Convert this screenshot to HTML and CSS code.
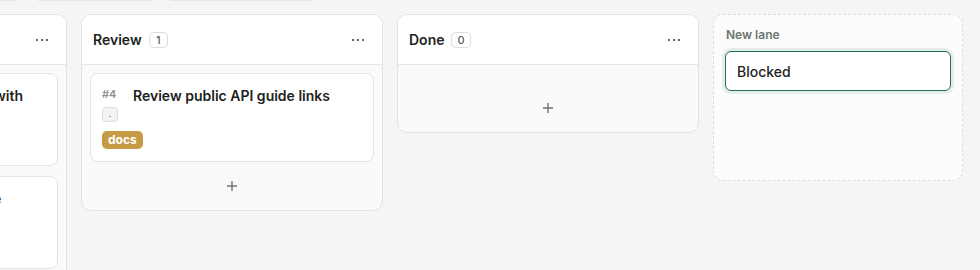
FILE: index.html
```html
<!DOCTYPE html>
<html lang="en">
<head>
<meta charset="utf-8">
<title>Board</title>
<link rel="stylesheet" href="styles.css">
</head>
<body>
<div class="toolbar">
  <span class="tool tool-a"></span>
  <span class="tool tool-b"></span>
  <span class="tool tool-c"></span>
</div>
<div class="board">
  <section class="lane lane-cut">
    <header class="lane-head">
      <h2 class="lane-title">In progress</h2>
      <span class="count">2</span>
      <button class="more" aria-label="Lane menu"><svg width="14" height="4" viewBox="0 0 14 4"><rect x="1" y="1" width="2" height="2"/><rect x="6" y="1" width="2" height="2"/><rect x="11" y="1" width="2" height="2"/></svg></button>
    </header>
    <div class="lane-body">
      <div class="cards">
        <article class="card">
          <div class="card-row">
            <div class="card-meta"><span class="card-id">#2</span><span class="chip">.</span></div>
            <h3 class="card-title">Replace legacy time input with native picker</h3>
          </div>
          <div class="tags"><span class="tag tag-ui">ui</span></div>
        </article>
        <article class="card">
          <div class="card-row">
            <div class="card-meta"><span class="card-id">#3</span><span class="chip">.</span></div>
            <h3 class="card-title">Audit contrast in the profile header</h3>
          </div>
          <div class="tags"><span class="tag tag-docs">a11y</span></div>
        </article>
      </div>
      <button class="add" aria-label="Add card"><svg width="12" height="12" viewBox="0 0 12 12"><path d="M6 1v10M1 6h10"/></svg></button>
    </div>
  </section>

  <section class="lane">
    <header class="lane-head">
      <h2 class="lane-title">Review</h2>
      <span class="count">1</span>
      <button class="more" aria-label="Lane menu"><svg width="14" height="4" viewBox="0 0 14 4"><rect x="1" y="1" width="2" height="2"/><rect x="6" y="1" width="2" height="2"/><rect x="11" y="1" width="2" height="2"/></svg></button>
    </header>
    <div class="lane-body">
      <div class="cards">
        <article class="card">
          <div class="card-row">
            <div class="card-meta"><span class="card-id">#4</span><span class="chip">.</span></div>
            <h3 class="card-title">Review public API guide links</h3>
          </div>
          <div class="tags"><span class="tag tag-docs">docs</span></div>
        </article>
      </div>
      <button class="add" aria-label="Add card"><svg width="12" height="12" viewBox="0 0 12 12"><path d="M6 1v10M1 6h10"/></svg></button>
    </div>
  </section>

  <section class="lane">
    <header class="lane-head">
      <h2 class="lane-title">Done</h2>
      <span class="count">0</span>
      <button class="more" aria-label="Lane menu"><svg width="14" height="4" viewBox="0 0 14 4"><rect x="1" y="1" width="2" height="2"/><rect x="6" y="1" width="2" height="2"/><rect x="11" y="1" width="2" height="2"/></svg></button>
    </header>
    <div class="lane-body">
      <div class="cards cards-empty"></div>
      <button class="add" aria-label="Add card"><svg width="12" height="12" viewBox="0 0 12 12"><path d="M6 1v10M1 6h10"/></svg></button>
    </div>
  </section>

  <section class="new-lane">
    <label class="new-label" for="lane-name">New lane</label>
    <input id="lane-name" class="new-input" type="text" value="Blocked">
  </section>
</div>
</body>
</html>
```

FILE: styles.css
```css
* { box-sizing: border-box; }

html, body {
  margin: 0;
  padding: 0;
  background: #f5f5f5;
  font-family: Inter, "Noto Sans", sans-serif;
  color: #1d2320;
  overflow: hidden;
}

.toolbar {
  display: flex;
  margin-top: -31px;
  margin-left: -40px;
  margin-bottom: 13px;
  height: 32px;
}

.tool {
  display: block;
  height: 32px;
  border: 1px solid #e6e6e6;
  border-radius: 6px;
  background: #f1f1f1;
}
.tool-a { width: 61px; }
.tool-b { width: 123px; margin-left: 13px; }
.tool-c { width: 149px; margin-left: 9px; }

.board {
  display: flex;
  align-items: flex-start;
  gap: 14px;
  margin-left: -235px;
}

.lane {
  flex: 0 0 302px;
  width: 302px;
  border: 1px solid #e3e3e3;
  border-radius: 10px;
  background: #fafafa;
  overflow: hidden;
}

.lane-head {
  display: flex;
  align-items: center;
  height: 50px;
  padding: 0 11px 0 11px;
  background: #ffffff;
  border-bottom: 1px solid #e6e6e6;
}

.lane-title {
  margin: 0;
  font-size: 14px;
  font-weight: 600;
  line-height: 20px;
  color: #1d2320;
}

.count {
  margin-left: 7px;
  min-width: 19px;
  height: 16px;
  padding: 0 5px;
  border: 1px solid #dcdcdc;
  border-radius: 5px;
  font-size: 11px;
  font-weight: 500;
  line-height: 14px;
  text-align: center;
  color: #56605b;
  background: #fff;
}

.more {
  margin-left: auto;
  width: 28px;
  height: 24px;
  padding: 0;
  border: 0;
  background: transparent;
  display: flex;
  align-items: center;
  justify-content: center;
  margin-right: -1px;
}
.more svg { fill: #5e6964; }

.lane-body {
  padding: 8px;
  display: flex;
  flex-direction: column;
  gap: 8px;
}

.cards {
  display: flex;
  flex-direction: column;
  gap: 10px;
}
.cards-empty { min-height: 11px; }

.card {
  background: #ffffff;
  border: 1px solid #e4e4e4;
  border-radius: 8px;
  padding: 12px 11px 12px 11px;
}

.card-row {
  display: flex;
  gap: 15px;
  align-items: flex-start;
}

.card-meta {
  display: flex;
  flex-direction: column;
  align-items: flex-start;
  gap: 5px;
  width: 16px;
  flex: 0 0 16px;
}

.card-id {
  font-size: 11px;
  font-weight: 600;
  line-height: 15px;
  margin-top: 1px;
  color: #8b9590;
}

.chip {
  width: 16px;
  height: 15px;
  border: 1px solid #dddddd;
  border-radius: 4px;
  background: #f3f3f3;
  font-size: 9px;
  line-height: 11px;
  text-align: center;
  color: #777;
}

.card-title {
  margin: 0;
  font-size: 14px;
  font-weight: 600;
  line-height: 20px;
  color: #1d2320;
}

.tags {
  display: flex;
  gap: 6px;
  margin-top: 9px;
}

.tag {
  display: inline-block;
  height: 18px;
  padding: 0 6px;
  border-radius: 5px;
  font-size: 12px;
  font-weight: 700;
  line-height: 18px;
  color: #ffffff;
}
.tag-docs { background: #c79a46; }
.tag-ui { background: #5a8fbf; }

.add {
  height: 32px;
  border: 0;
  background: transparent;
  padding: 0;
  display: flex;
  align-items: center;
  justify-content: center;
}
.add svg {
  stroke: #6b7570;
  stroke-width: 1.4;
  fill: none;
}

.new-lane {
  flex: 0 0 250px;
  width: 250px;
  min-height: 167px;
  border: 1px dashed #dcdcdc;
  border-radius: 10px;
  background: #fcfcfc;
  padding: 11px 11px;
  display: flex;
  flex-direction: column;
  gap: 8px;
}

.new-label {
  padding-left: 1px;
  margin-top: 1px;
  font-size: 12px;
  font-weight: 600;
  line-height: 16px;
  color: #6b7571;
}

.new-input {
  width: 100%;
  height: 40px;
  padding: 0 11px;
  border: 1px solid #1f6f5c;
  border-radius: 6px;
  background: #ffffff;
  box-shadow: 0 0 0 3px rgba(31, 111, 92, 0.1);
  font-family: Inter, "Noto Sans", sans-serif;
  font-size: 14px;
  font-weight: 500;
  color: #1d2320;
  outline: none;
}
```
